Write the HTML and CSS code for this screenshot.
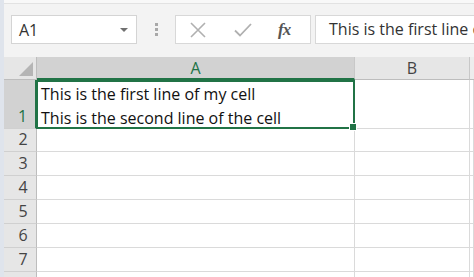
FILE: index.html
```html
<!DOCTYPE html>
<html>
<head>
<meta charset="utf-8">
<link rel="stylesheet" href="styles.css">
</head>
<body>
<div class="app">
  <div class="strip"></div>
  <div class="main">
    <div class="toolbar">
      <div class="namebox"><span class="ref">A1</span><span class="caret"></span></div>
      <div class="dots"><i></i><i></i><i></i></div>
      <div class="buttons">
        <svg class="btn" width="18" height="18" viewBox="0 0 18 18"><path d="M2 2L16 16M16 2L2 16" stroke="#b0b0b0" stroke-width="1.6" fill="none"/></svg>
        <svg class="btn" width="20" height="16" viewBox="0 0 20 16"><path d="M2 8.5L7 13.5L18 2" stroke="#b0b0b0" stroke-width="1.8" fill="none"/></svg>
        <span class="fx">fx</span>
      </div>
      <div class="formula">This is the first line of my cell</div>
    </div>
    <div class="grid">
      <div class="row head">
        <div class="rh corner"><span class="tri"></span></div>
        <div class="ch a sel">A</div>
        <div class="ch b">B</div>
        <div class="ch c"></div>
      </div>
      <div class="row r1">
        <div class="rh sel">1</div>
        <div class="cell a active">This is the first line of my cell<br>This is the second line of the cell<span class="handle"></span></div>
        <div class="cell b"></div>
        <div class="cell c"></div>
      </div>
      <div class="row r2"><div class="rh">2</div><div class="cell a"></div><div class="cell b"></div><div class="cell c"></div></div>
      <div class="row"><div class="rh">3</div><div class="cell a"></div><div class="cell b"></div><div class="cell c"></div></div>
      <div class="row"><div class="rh">4</div><div class="cell a"></div><div class="cell b"></div><div class="cell c"></div></div>
      <div class="row"><div class="rh">5</div><div class="cell a"></div><div class="cell b"></div><div class="cell c"></div></div>
      <div class="row"><div class="rh">6</div><div class="cell a"></div><div class="cell b"></div><div class="cell c"></div></div>
      <div class="row"><div class="rh">7</div><div class="cell a"></div><div class="cell b"></div><div class="cell c"></div></div>
      <div class="row"><div class="rh"></div><div class="cell a"></div><div class="cell b"></div><div class="cell c"></div></div>
    </div>
  </div>
</div>
</body>
</html>
```
FILE: styles.css
```css
html, body { margin: 0; padding: 0; }
body {
  width: 474px; height: 277px; overflow: hidden;
  font-family: "Open Sans", "Noto Sans", sans-serif;
  background: #ffffff;
}
.app { display: flex; height: 277px; overflow: hidden; }
.strip { width: 4px; background: #dfe4ec; flex: none; }
.main { flex: 1; display: flex; flex-direction: column; min-width: 0; overflow: hidden; }
.toolbar {
  flex: none;
  height: 57px; box-sizing: border-box;
  background: #f3f3f3; border-top: 3px solid #f8f8f8;
  display: flex; align-items: flex-start; padding-top: 12px; padding-left: 7px;
  box-shadow: inset 0 1px 0 #e2e2e2;
}
.namebox {
  flex: none;
  width: 126px; height: 29px; box-sizing: border-box;
  background: #fff; border: 1px solid #d4d4d4;
  display: flex; align-items: center; justify-content: space-between;
  padding: 0 8px 0 7px;
}
.ref { font-size: 16px; color: #333; }
.caret { width: 0; height: 0; border-left: 4px solid transparent; border-right: 4px solid transparent; border-top: 4px solid #707070; }
.dots { flex: none; width: 38px; height: 29px; display: flex; flex-direction: column; align-items: center; justify-content: center; gap: 2px; }
.dots i { width: 3px; height: 3px; background: #a8a8a8; display: block; }
.buttons {
  flex: none;
  width: 136px; height: 29px; box-sizing: border-box;
  background: #fff; border: 1px solid #d8d8d8;
  display: flex; align-items: center; padding-left: 13px; gap: 0;
}
.btn:first-child { margin-right: 26px; }
.btn:nth-child(2) { margin-right: 25px; }
.fx { font-family: "Liberation Serif", "DejaVu Serif", serif; font-style: italic; font-weight: bold; font-size: 17px; color: #555; letter-spacing: -1px; }
.formula {
  flex: 1; height: 29px; box-sizing: border-box; margin-left: 4px;
  background: #fff; border: 1px solid #d8d8d8; border-right: none;
  font-size: 16px; line-height: 27px; color: #333; padding-left: 13px;
  white-space: nowrap; overflow: hidden;
}
.grid { display: flex; flex-direction: column; flex: none; }
.row { display: flex; height: 24px; flex: none; }
.row.head { height: 23px; }
.row.r1 { height: 49px; }
.row.r2 { height: 23px; }
.rh {
  width: 33px; flex: none; box-sizing: border-box;
  background: #e6e6e6; border-right: 1px solid #bdbdbd; border-bottom: 1px solid #d0d0d0;
  font-size: 16px; color: #444; text-align: center;
  display: flex; align-items: flex-end; justify-content: center; line-height: 23px;
}
.row:not(.head) .rh { padding-left: 6px; }
.rh.sel { background: #d2d2d2; color: #217346; border-right: 2px solid #217346; }
.corner { position: relative; border-bottom: 1px solid #bdbdbd; }
.tri {
  position: absolute; right: 3px; bottom: 3px; width: 0; height: 0;
  border-left: 14px solid transparent; border-bottom: 14px solid #b5b5b5;
}
.ch {
  box-sizing: border-box; background: #e6e6e6;
  border-right: 1px solid #c8c8c8; border-bottom: 1px solid #bdbdbd;
  font-size: 16px; color: #444; text-align: center; line-height: 23px;
}
.ch.sel { background: #d2d2d2; color: #217346; border-bottom: 2px solid #217346; }
.a { width: 318px; flex: none; }
.b { width: 115px; flex: none; }
.c { flex: 1; }
.ch.c { background: #ededed; border-right: none; }
.cell {
  box-sizing: border-box; border-right: 1px solid #dadada; border-bottom: 1px solid #dadada; background: #fff;
}
.cell.active {
  position: relative; border: 2px solid #217346; margin-left: -1px; width: 319px;
  font-size: 16px; line-height: 24px; color: #111; padding: 0 0 0 3px; white-space: nowrap;
}
.handle {
  position: absolute; right: -4px; bottom: -4px; width: 6px; height: 6px;
  background: #217346; border: 1px solid #fff;
}
```
